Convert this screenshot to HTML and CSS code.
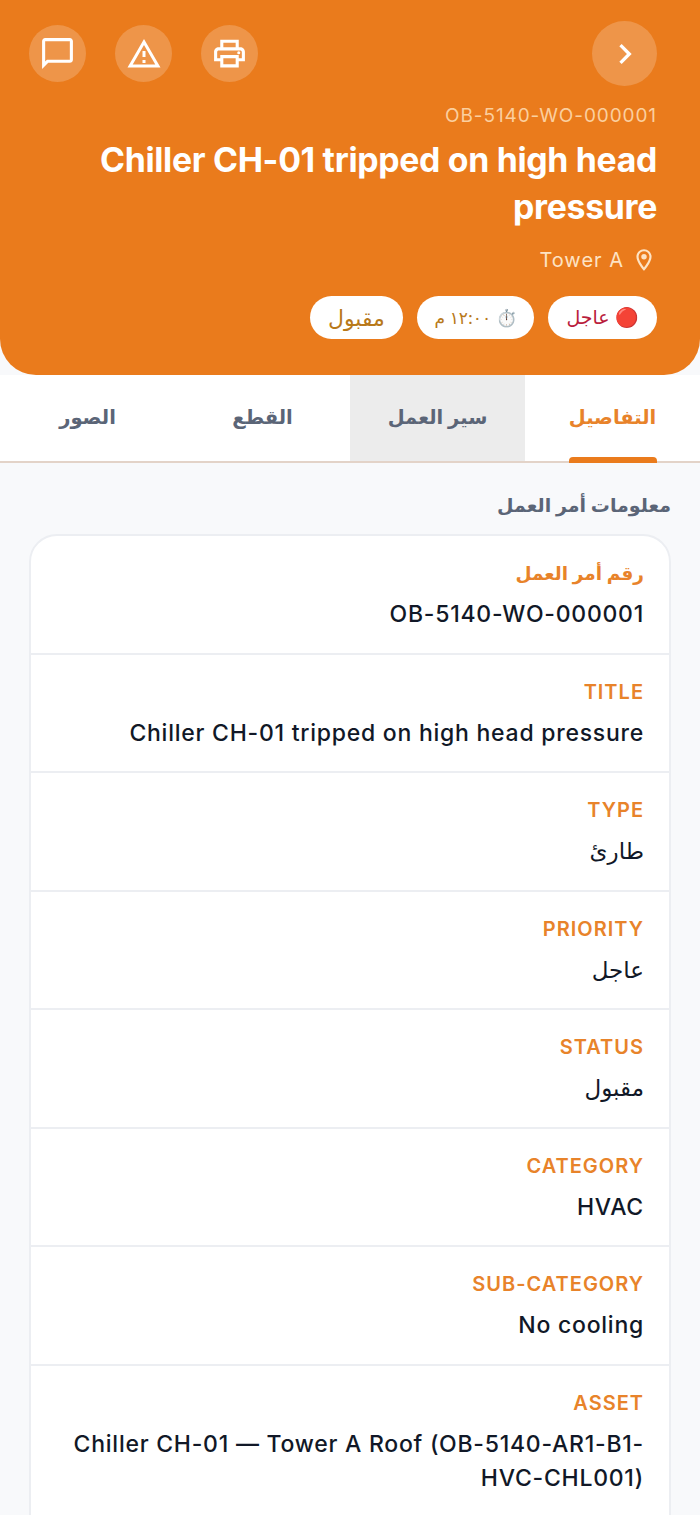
FILE: index.html
```html
<!DOCTYPE html>
<html lang="ar" dir="rtl">
<head>
    <meta charset="UTF-8">
    <meta name="viewport" content="width=device-width, initial-scale=1.0">
    <title>Work Order</title>
    <link rel="stylesheet" href="styles.css">
</head>
<body>
    <header class="hero">
        <div class="hero-top">
            <button class="back-btn" aria-label="back">
                <svg width="40" height="40" viewBox="0 0 24 24" fill="#fff"><path d="M10 6L8.590 7.410 13.170 12l-4.580 4.590L10 18l6-6z"/></svg>
            </button>
            <div class="hero-actions">
                <button class="icon-btn" aria-label="print">
                    <svg width="37" height="37" viewBox="0 0 24 24" fill="#fff"><path d="M19 8h-1V3H6v5H5c-1.660 0-3 1.340-3 3v6h4v4h12v-4h4v-6c0-1.660-1.340-3-3-3zM8 5h8v3H8V5zm8 12v2H8v-4h8v2zm2-2v-2H6v2H4v-4c0-.550.450-1 1-1h14c.550 0 1 .450 1 1v4h-2z"/><circle cx="18" cy="11.500" r="1"/></svg>
                </button>
                <button class="icon-btn" aria-label="report">
                    <svg width="36" height="36" viewBox="0 0 24 24" fill="#fff"><path d="M12 5.990L19.530 19H4.470L12 5.990M12 2L1 21h22L12 2zm1 14h-2v2h2v-2zm0-6h-2v4h2v-4z"/></svg>
                </button>
                <button class="icon-btn" aria-label="chat">
                    <svg width="37" height="37" viewBox="0 0 24 24" fill="#fff"><path d="M20 2H4c-1.100 0-2 .900-2 2v18l4-4h14c1.100 0 2-.900 2-2V4c0-1.100-.900-2-2-2zm0 14H5.170L4 17.170V4h16v12z"/></svg>
                </button>
            </div>
        </div>
        <div class="wo-code" dir="ltr">OB-5140-WO-000001</div>
        <h1 class="wo-title" dir="ltr">Chiller CH-01 tripped on high head pressure</h1>
        <div class="wo-location">
            <svg width="26" height="26" viewBox="0 0 24 24" fill="#fde3c4"><path d="M12 2C8.130 2 5 5.130 5 9c0 5.250 7 13 7 13s7-7.750 7-13c0-3.870-3.130-7-7-7zM7 9c0-2.760 2.240-5 5-5s5 2.240 5 5c0 2.880-2.880 7.190-5 9.880C9.920 16.210 7 11.850 7 9z"/><circle cx="12" cy="9" r="2.500"/></svg>
            <span>Tower A</span>
        </div>
        <div class="pills">
            <span class="pill pill-urgent">🔴 عاجل</span>
            <span class="pill pill-time">⏱️ ١٢:٠٠ م</span>
            <span class="pill pill-status">مقبول</span>
        </div>
    </header>

    <nav class="tabs">
        <a class="tab active">التفاصيل</a>
        <a class="tab hovered">سير العمل</a>
        <a class="tab">القطع</a>
        <a class="tab">الصور</a>
    </nav>

    <main class="content">
        <h2 class="section-title">معلومات أمر العمل</h2>
        <section class="card">
            <div class="row"><div class="row-label label-ar">رقم أمر العمل</div><div class="row-value">OB-5140-WO-000001</div></div>
            <div class="row"><div class="row-label">TITLE</div><div class="row-value">Chiller CH-01 tripped on high head pressure</div></div>
            <div class="row"><div class="row-label">TYPE</div><div class="row-value">طارئ</div></div>
            <div class="row"><div class="row-label">PRIORITY</div><div class="row-value">عاجل</div></div>
            <div class="row"><div class="row-label">STATUS</div><div class="row-value">مقبول</div></div>
            <div class="row"><div class="row-label">CATEGORY</div><div class="row-value">HVAC</div></div>
            <div class="row"><div class="row-label">SUB-CATEGORY</div><div class="row-value">No cooling</div></div>
            <div class="row"><div class="row-label">ASSET</div><div class="row-value">Chiller CH-01 — Tower A Roof (OB-5140-AR1-B1-HVC-CHL001)</div></div>
        </section>
    </main>
</body>
</html>
```

FILE: styles.css
```css
* {
    box-sizing: border-box;
}
html, body {
    height: 1515px;
    overflow: hidden;
}
body {
    margin: 0;
    font-family: Inter, "Noto Sans", "DejaVu Sans", sans-serif;
    background-color: #f8f9fb;
    color: #111827;
}
.hero {
    height: 375px;
    padding: 21px 43px 0 29px;
    background-color: #ea7b1c;
    border-radius: 0 0 36px 36px;
    color: #fff;
}
.hero-top {
    display: flex;
    justify-content: space-between;
    align-items: center;
    height: 65px;
}
.hero-actions {
    display: flex;
    gap: 29px;
}
button {
    display: flex;
    align-items: center;
    justify-content: center;
    padding: 0;
    border: none;
    border-radius: 50%;
    background-color: rgba(255, 255, 255, 0.2);
    color: #fff;
}
.back-btn {
    width: 65px;
    height: 65px;
}
.icon-btn {
    width: 57px;
    height: 57px;
}
.wo-code {
    margin-top: 18px;
    font-size: 19px;
    line-height: 24px;
    letter-spacing: 0.9px;
    text-align: right;
    color: #fbcf9f;
}
.wo-title {
    margin: 8px 0 0;
    font-size: 33.8px;
    line-height: 47px;
    font-weight: 700;
    text-align: right;
    letter-spacing: -0.3px;
}
.wo-location {
    display: flex;
    align-items: center;
    gap: 7px;
    margin-top: 17px;
    height: 26px;
    font-size: 20px;
    letter-spacing: 1px;
    color: #fde3c4;
}
.pills {
    display: flex;
    gap: 14px;
    margin-top: 23px;
}
.pill {
    display: flex;
    align-items: center;
    height: 43px;
    padding: 0 18px;
    border-radius: 22px;
    background-color: #fff;
    font-size: 19px;
}
.pill-urgent {
    color: #b91c3c;
}
.pill-time {
    padding: 0 17.500px;
    font-size: 17px;
    color: #b8791a;
}
.pill-status {
    font-size: 22px;
    color: #b8791a;
}
.tabs {
    display: flex;
    height: 88px;
    background-color: #fff;
    border-bottom: 2px solid #e3d3c8;
}
.tab {
    position: relative;
    flex: 0 0 175px;
    display: flex;
    align-items: center;
    justify-content: center;
    padding-bottom: 2px;
    font-size: 19.500px;
    font-weight: 600;
    color: #5b6577;
}
.tab.active {
    color: #e8832a;
}
.tab.active::after {
    content: "";
    position: absolute;
    right: 43px;
    bottom: -2px;
    width: 88px;
    height: 6px;
    border-radius: 4px 4px 0 0;
    background-color: #ea7b1c;
}
.tab.hovered {
    background-color: #ececec;
}
.content {
    padding: 28px 29px 0;
}
.section-title {
    margin: 0 0 13px;
    font-size: 19px;
    line-height: 30px;
    font-weight: 600;
    color: #5b6577;
}
.card {
    background-color: #fff;
    border: 2px solid #eceef2;
    border-radius: 28px;
}
.row {
    height: 118.500px;
    padding: 22px 25px 0;
    border-bottom: 2px solid #eceef2;
}
.row:last-child {
    height: 220px;
    border-bottom: none;
}
.row-label {
    font-size: 20px;
    line-height: 30px;
    font-weight: 600;
    letter-spacing: 1px;
    color: #e8832a;
}
.label-ar {
    font-size: 18.500px;
    letter-spacing: 0;
}
.row-value {
    margin-top: 9px;
    font-size: 23px;
    line-height: 34px;
    font-weight: 500;
    letter-spacing: 0.750px;
    color: #111827;
}
```
